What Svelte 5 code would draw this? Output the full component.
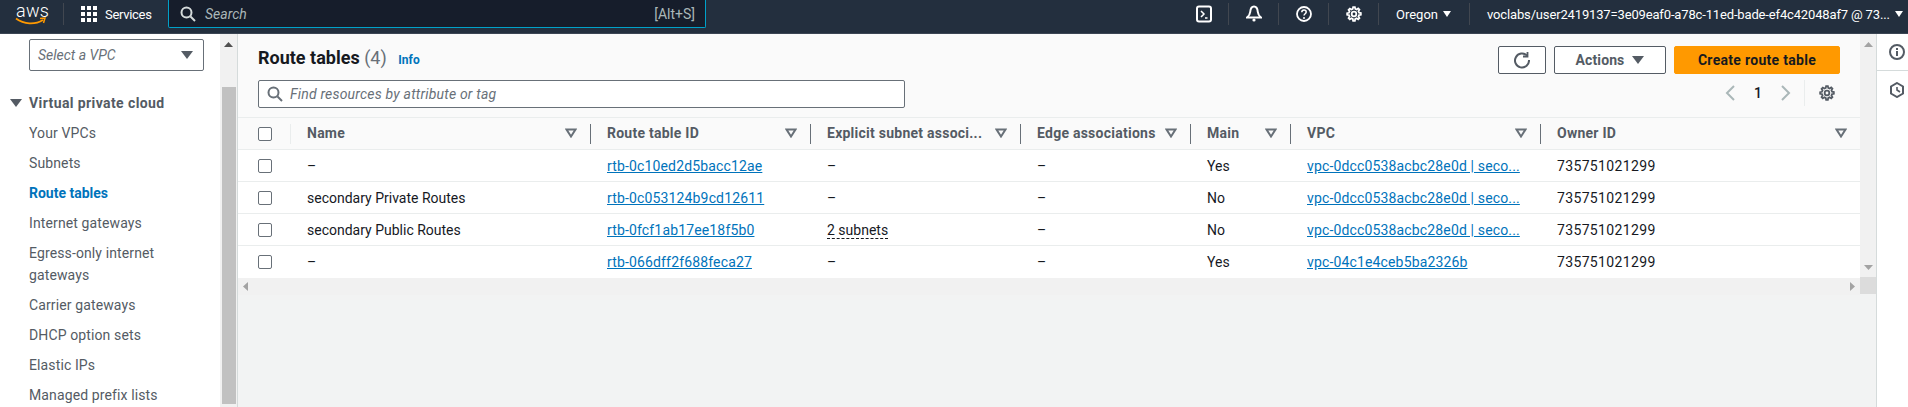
<script>
  const columns = [
    { label: 'Name', width: 300 },
    { label: 'Route table ID', width: 220 },
    { label: 'Explicit subnet associ...', width: 210 },
    { label: 'Edge associations', width: 170 },
    { label: 'Main', width: 100 },
    { label: 'VPC', width: 250 },
    { label: 'Owner ID', width: 320 }
  ];
  const rows = [
    { name: '–', id: 'rtb-0c10ed2d5bacc12ae', sub: '–', main: 'Yes', vpc: 'vpc-0dcc0538acbc28e0d | seco...' },
    { name: 'secondary Private Routes', id: 'rtb-0c053124b9cd12611', sub: '–', main: 'No', vpc: 'vpc-0dcc0538acbc28e0d | seco...' },
    { name: 'secondary Public Routes', id: 'rtb-0fcf1ab17ee18f5b0', sub: '2 subnets', main: 'No', vpc: 'vpc-0dcc0538acbc28e0d | seco...' },
    { name: '–', id: 'rtb-066dff2f688feca27', sub: '–', main: 'Yes', vpc: 'vpc-04c1e4ceb5ba2326b' }
  ];
  const nav = [
    ['Your VPCs'], ['Subnets'], ['Route tables', true], ['Internet gateways'],
    ['Egress-only internet gateways'], ['Carrier gateways'], ['DHCP option sets'],
    ['Elastic IPs'], ['Managed prefix lists']
  ];
  const gearPath = 'M8 1.2h2l.4 2 1.5.7 1.8-1.1 1.4 1.4-1.1 1.8.7 1.5 2 .4v2l-2 .4-.7 1.5 1.1 1.8-1.4 1.4-1.8-1.1-1.5.7-.4 2H8l-.4-2-1.5-.7-1.8 1.1-1.4-1.4 1.1-1.8-.7-1.5-2-.4V8l2-.4.7-1.5-1.1-1.8 1.4-1.4 1.8 1.1 1.5-.7z';
</script>

<div class="page">
  <header class="topbar">
    <div class="logo">
      <span class="logo-word">aws</span>
      <svg class="smile" width="32" height="9" viewBox="0 0 32 9"><path d="M1 1.500C9 7.500 20 8 28 3" fill="none" stroke="#f90" stroke-width="1.800"/><path d="M25 1.500l5-.5-1.500 5" fill="none" stroke="#f90" stroke-width="1.500"/></svg>
    </div>
    <span class="sep logo-sep"></span>
    <svg class="grid-icon" width="16" height="16" viewBox="0 0 16 16" fill="#fff">
      {#each [0, 6, 12] as y}{#each [0, 6, 12] as x}<rect {x} {y} width="4" height="4"/>{/each}{/each}
    </svg>
    <span class="services">Services</span>
    <div class="search">
      <svg width="16" height="16" viewBox="0 0 16 16" fill="none" stroke="#d5dbdb" stroke-width="2"><circle cx="6.500" cy="6.500" r="5"/><path d="M10.500 10.500l4.500 4.500"/></svg>
      <span class="search-text">Search</span>
      <span class="search-key">[Alt+S]</span>
    </div>
    <div class="top-right">
      <svg class="ti" width="16" height="18" viewBox="0 0 16 18" fill="none" stroke="#fff" stroke-width="2"><rect x="1" y="1.500" width="14" height="15" rx="2"/><path d="M5 6l3 3-3 3M9 13h2.500" stroke-width="1.500"/></svg>
      <span class="sep"></span>
      <svg class="ti" width="16" height="18" viewBox="0 0 16 18" fill="none" stroke="#fff" stroke-width="2"><path d="M8 1.500c-3 0-3.600 3-3.800 5.500-.2 2.300-1.400 4-3.200 5.500h14C13.200 11 12 9.300 11.800 7 11.600 4.500 11 1.500 8 1.500z"/><circle cx="8" cy="15" r="1.600" fill="#fff" stroke="none"/></svg>
      <span class="sep"></span>
      <svg class="ti" width="16" height="16" viewBox="0 0 16 16" fill="none" stroke="#fff" stroke-width="1.800"><circle cx="8" cy="8" r="7"/><path d="M5.800 6.300C5.800 4.900 6.800 4 8 4s2.200.9 2.200 2.100c0 1.600-2.200 1.700-2.200 3.400" stroke-width="1.500"/><circle cx="8" cy="12" r="1" fill="#fff" stroke="none"/></svg>
      <span class="sep"></span>
      <svg class="ti" width="16" height="16" viewBox="0 0 18 18" fill="none" stroke="#fff" stroke-width="2"><path d={gearPath}/><circle cx="9" cy="9" r="2.600"/></svg>
      <span class="sep"></span>
      <span class="region">Oregon</span><span class="tri small"></span>
      <span class="sep"></span>
      <span class="account">voclabs/user2419137=3e09eaf0-a78c-11ed-bade-ef4c42048af7 @ 73...</span><span class="tri small"></span>
    </div>
  </header>

  <div class="body">
    <aside class="sidebar">
      <div class="vpc-select"><span>Select a VPC</span><i class="tri grey"></i></div>
      <div class="nav-title"><i class="tri grey"></i><span>Virtual private cloud</span></div>
      <ul class="nav-list">
        {#each nav as [label, active]}
          <li class:active>{label}</li>
        {/each}
      </ul>
    </aside>
    <div class="sb-v side-sb">
      <svg width="9" height="5" viewBox="0 0 9 5"><path d="M4.500 0l4.500 5H0z" fill="#505050"/></svg>
      <div class="thumb"></div>
    </div>

    <main class="main">
      <div class="panel">
        <section class="head">
          <div class="head-left">
            <h1>Route tables <span class="count">(4)</span> <span class="info">Info</span></h1>
            <div class="filter">
              <svg width="16" height="16" viewBox="0 0 16 16" fill="none" stroke="#687078" stroke-width="2"><circle cx="6.500" cy="6.500" r="5"/><path d="M10.500 10.500l4.500 4.500"/></svg>
              <span>Find resources by attribute or tag</span>
            </div>
          </div>
          <div class="head-right">
            <div class="buttons">
              <button class="btn refresh" aria-label="Refresh">
                <svg width="16" height="18" viewBox="0 0 16 18" fill="none" stroke="#545b64" stroke-width="2"><path d="M13 4.600A7 7 0 1 0 15 9"/><path d="M13.500 1v4.500H9" stroke-width="1.800"/></svg>
              </button>
              <button class="btn actions">Actions <i class="tri grey"></i></button>
              <button class="btn primary">Create route table</button>
            </div>
            <div class="pager">
              <svg width="10" height="16" viewBox="0 0 10 16" fill="none" stroke="#aab7b8" stroke-width="2"><path d="M9 1L2 8l7 7"/></svg>
              <span class="page-no">1</span>
              <svg width="10" height="16" viewBox="0 0 10 16" fill="none" stroke="#aab7b8" stroke-width="2"><path d="M1 1l7 7-7 7"/></svg>
              <span class="pager-sep"></span>
              <svg width="16" height="16" viewBox="0 0 18 18" fill="none" stroke="#545b64" stroke-width="2"><path d={gearPath}/><circle cx="9" cy="9" r="2.600"/></svg>
            </div>
          </div>
        </section>

        <table>
          <thead>
            <tr>
              <th class="check-col"><span class="cb"></span></th>
              {#each columns as col}
                <th style="width:{col.width}px">
                  <div class="th-in">
                    <span>{col.label}</span>
                    <svg width="12" height="10" viewBox="0 0 12 10" fill="none" stroke="#687078" stroke-width="2"><path d="M1.500 1.500h9L6 8.500z"/></svg>
                  </div>
                </th>
              {/each}
            </tr>
          </thead>
          <tbody>
            {#each rows as row}
              <tr>
                <td class="check-col"><span class="cb"></span></td>
                <td>{row.name}</td>
                <td><span class="link">{row.id}</span></td>
                <td><span class:dashed={row.sub !== '–'}>{row.sub}</span></td>
                <td>–</td>
                <td>{row.main}</td>
                <td><span class="link">{row.vpc}</span></td>
                <td class="num">735751021299</td>
              </tr>
            {/each}
          </tbody>
        </table>

        <div class="sb-h">
          <svg width="5" height="9" viewBox="0 0 5 9"><path d="M0 4.500L5 0v9z" fill="#a3a3a3"/></svg>
          <svg width="5" height="9" viewBox="0 0 5 9"><path d="M5 4.500L0 0v9z" fill="#a3a3a3"/></svg>
        </div>
      </div>

      <div class="sb-col">
        <div class="sb-v main-sb">
          <svg width="9" height="5" viewBox="0 0 9 5"><path d="M4.500 0l4.500 5H0z" fill="#a3a3a3"/></svg>
          <svg width="9" height="5" viewBox="0 0 9 5"><path d="M4.500 5L9 0H0z" fill="#a3a3a3"/></svg>
        </div>
        <div class="corner"></div>
      </div>
    </main>

    <aside class="tools">
      <div class="tool first">
        <svg width="16" height="16" viewBox="0 0 16 16" fill="none" stroke="#545b64" stroke-width="2"><circle cx="8" cy="8" r="7"/><path d="M8 7v5M8 4v2" /></svg>
      </div>
      <div class="tool">
        <svg width="14" height="16" viewBox="0 0 14 16" fill="none" stroke="#545b64" stroke-width="2"><path d="M7 1l6 3.500v7L7 15l-6-3.500v-7z"/><path d="M7 5v3l3 2" stroke-width="1.600"/></svg>
      </div>
    </aside>
  </div>
</div>

<style>
  :global(body) { margin: 0; }
  * { box-sizing: border-box; }
  .page {
    height: 407px; width: 1908px; overflow: hidden; display: flex; flex-direction: column;
    font-family: Roboto, "Liberation Sans", sans-serif; font-size: 14px; color: #16191f; background: #fff;
  }
  .tri { display: inline-block; width: 0; height: 0; border-left: 6px solid transparent; border-right: 6px solid transparent; border-top: 8px solid #545b64; }
  .tri.small { border-left-width: 4px; border-right-width: 4px; border-top: 6px solid #fff; margin-left: 5px; }

  .topbar { height: 34px; flex: none; background: #232f3e; border-bottom: 1px solid #3b4553; display: flex; align-items: center; color: #fff; padding: 0 0 5px 15px; }
  .logo { width: 32px; height: 28px; position: relative; }
  .logo-word { position: absolute; left: 1px; top: 0; font: 300 18px/21px Roboto, sans-serif; letter-spacing: .3px; }
  .smile { position: absolute; left: 0; top: 17px; }
  .sep { width: 1px; height: 22px; background: #414750; flex: none; }
  .logo-sep { margin: 0 17px 0 16px; }
  .services { margin-left: 8px; font-size: 13px; width: 63px; letter-spacing: -.3px; }
  .search { width: 538px; height: 28px; align-self: flex-start; background: #161d2b; border: 1px solid #00a1c9; border-top: 0; border-radius: 0 0 2px 2px; display: flex; align-items: center; padding: 0 10px 0 11px; color: #aab7b8; font-size: 14px; }
  .search-text { font-style: italic; margin-left: 9px; flex: 1; }
  .top-right { display: flex; align-items: center; position: absolute; left: 1196px; top: 0; height: 28px; }
  .top-right .sep { margin: 0 17px 0 16px; }
  .region, .account { font-size: 13px; white-space: nowrap; }
  .account { letter-spacing: -.15px; }
  .top-right .tri.small + .sep { margin-left: 18px; }

  .body { flex: 1; display: flex; min-height: 0; }
  .sidebar { width: 220px; flex: none; padding-top: 5px; overflow: hidden; color: #545b64; }
  .vpc-select { margin-left: 29px; width: 175px; height: 32px; border: 1px solid #687078; border-radius: 2px; display: flex; align-items: center; justify-content: space-between; padding: 0 10px 0 8px; font-style: italic; color: #687078; }
  .nav-title { display: flex; align-items: center; margin: 21px 0 0 10px; height: 22px; font-weight: 700; color: #545b64; gap: 7px; letter-spacing: .4px; }
  .nav-list { list-style: none; margin: 8px 0 0; padding: 0 12px 0 29px; letter-spacing: .12px; }
  .nav-list li { line-height: 22px; margin-bottom: 8px; }
  .nav-list li.active { color: #0073bb; font-weight: 700; letter-spacing: 0; }

  .sb-v { width: 17px; flex: none; background: #f1f1f1; display: flex; flex-direction: column; align-items: center; }
  .side-sb { padding-top: 8px; }
  .thumb { width: 14px; background: #c1c1c1; height: 317px; margin-top: 40px; }

  .main { width: 1639px; flex: none; display: flex; background: #f2f3f3; border-left: 1px solid #d5dbdb; }
  .panel { width: 1622px; flex: none; display: flex; flex-direction: column; }
  .head { height: 83px; background: #fafafa; display: flex; justify-content: space-between; padding: 0 20px; }
  h1 { margin: 13px 0 0; font-size: 18px; line-height: 22px; font-weight: 700; }
  .count { font-weight: 400; color: #687078; }
  .info { font-size: 12px; color: #0073bb; margin-left: 7px; letter-spacing: .1px; }
  .filter { width: 647px; height: 28px; margin-top: 9px; background: #fff; border: 1px solid #687078; border-radius: 2px; display: flex; align-items: center; gap: 7px; padding: 0 8px; font-style: italic; color: #687078; letter-spacing: .2px; }
  .buttons { display: flex; gap: 8px; padding-top: 12px; }
  .btn { height: 28px; font: 700 14px Roboto, sans-serif; background: #fff; border: 1px solid #545b64; border-radius: 2px; color: #545b64; display: flex; align-items: center; justify-content: center; padding: 0; }
  .refresh { width: 48px; }
  .actions { width: 112px; gap: 8px; letter-spacing: .1px; }
  .primary { width: 166px; background: #f90; border-color: #f90; color: #16191f; letter-spacing: .3px; }
  .pager { display: flex; align-items: center; height: 28px; margin-top: 5px; justify-content: flex-end; padding-right: 5px; }
  .page-no { margin: 0 19px; font-weight: 500; }
  .pager-sep { width: 1px; height: 26px; background: #eaeded; margin: 0 14px 0 13px; }

  table { width: 1622px; table-layout: fixed; border-collapse: collapse; background: #fff; }
  thead tr { height: 32px; background: #fafafa; border-top: 1px solid #eaeded; border-bottom: 1px solid #eaeded; }
  tbody tr { height: 32px; border-bottom: 1px solid #eaeded; }
  tbody tr:last-child { border-bottom: 0; }
  th, td { padding: 0 0 0 17px; text-align: left; white-space: nowrap; }
  th { font-weight: 700; color: #545b64; position: relative; letter-spacing: .25px; }
  th::before { content: ""; position: absolute; left: 0; top: 6px; height: 20px; width: 1px; background: #687078; }
  th.check-col::before { display: none; }
  th:nth-child(2)::before { background: #eaeded; }
  .check-col { width: 52px; padding-left: 20px; }
  .th-in { display: flex; justify-content: space-between; align-items: center; padding: 0 13px 2px 0; }
  .th-in svg { margin-top: 1px; }
  .cb { display: block; width: 14px; height: 14px; border: 1px solid #687078; border-radius: 2px; background: #fff; }
  .link { color: #0073bb; text-decoration: underline; letter-spacing: .15px; }
  .num { letter-spacing: .35px; }
  .dashed { border-bottom: 1px dashed #16191f; }

  .sb-h { height: 17px; flex: none; background: #f1f1f1; display: flex; align-items: center; justify-content: space-between; padding: 0 5px; }
  .sb-col { width: 17px; flex: none; display: flex; flex-direction: column; }
  .main-sb { height: 243px; justify-content: space-between; padding: 8px 0 7px; }
  .corner { height: 17px; background: #dcdcdc; }

  .tools { flex: 1; border-left: 1px solid #d5dbdb; background: #fff; }
  .tool { height: 37px; display: flex; align-items: center; justify-content: center; padding-left: 9px; }
  .tool.first { border-bottom: 1px solid #d5dbdb; }
</style>
